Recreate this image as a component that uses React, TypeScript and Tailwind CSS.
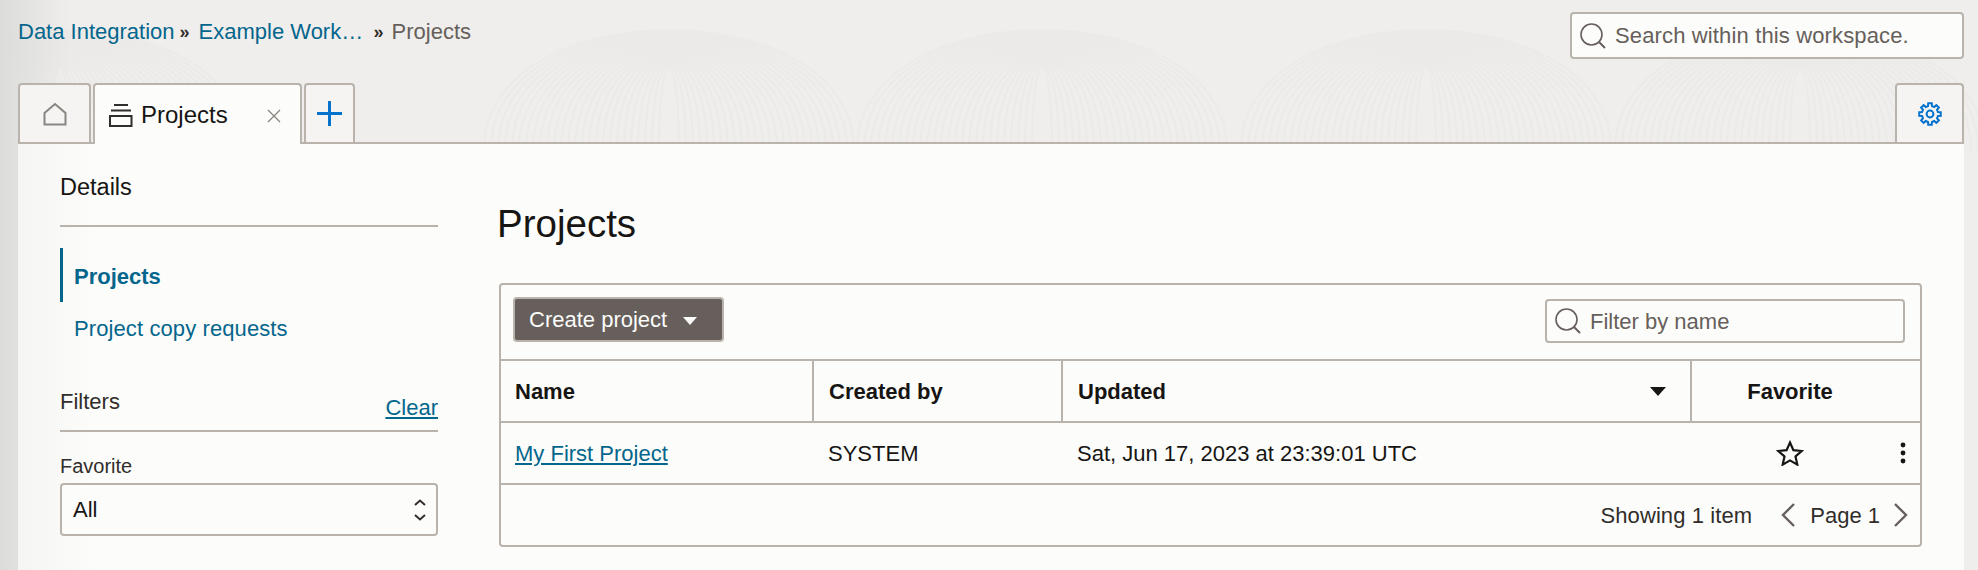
import { ReactNode } from "react";

// Gear outline with square teeth, like the settings tab icon
const gearPath = (() => {
  const teeth = 8;
  const cx = 12;
  const cy = 12;
  const points: string[] = [];
  for (let i = 0; i < teeth; i++) {
    const a = (i * Math.PI * 2) / teeth;
    const step = Math.PI / teeth;
    const corners: [number, number][] = [
      [8.2, a - step * 0.62],
      [10.9, a - step * 0.42],
      [10.9, a + step * 0.42],
      [8.2, a + step * 0.62],
    ];
    corners.forEach(([r, t]) => {
      points.push(`${(cx + r * Math.sin(t)).toFixed(2)} ${(cy - r * Math.cos(t)).toFixed(2)}`);
    });
  }
  return `M${points.join("L")}Z`;
})();

// Nested arches of the faint wood-grain backdrop
const grainCenters = [60, 669, 1042, 1426, 1800];
const grainRings = Array.from({ length: 26 }, (_, i) => i);

function SearchIcon({ size }: { size: number }) {
  return (
    <svg width={size} height={size} viewBox="0 0 26 26" fill="none" stroke="#665f5b" strokeWidth="1.6" className="shrink-0">
      <circle cx="11.5" cy="11.5" r="10.5" />
      <path d="M19 19l6 6" strokeWidth="2" />
    </svg>
  );
}

function Tab({ active, className, children }: { active?: boolean; className: string; children: ReactNode }) {
  return (
    <div
      className={`flex items-center rounded-t-[4px] border-2 border-b-0 border-[#b9b3ac] ${
        active ? "-mb-[2px] h-[61px] bg-[#fcfcfa]" : "h-[59px] bg-[#f5f4f2]"
      } ${className}`}
    >
      {children}
    </div>
  );
}

function HeaderCell({ className, children }: { className: string; children: ReactNode }) {
  return <div className={`flex items-center font-bold text-[#161513] ${className}`}>{children}</div>;
}

export default function App() {
  return (
    <div className="relative h-[570px] w-[1978px] overflow-hidden bg-[#efeeec] font-['Liberation_Sans',Arial,sans-serif] text-[22px] text-[#161513]">
      {/* textured backdrop */}
      <svg className="absolute inset-0" width="1978" height="570" fill="none" stroke="#ebeae8" strokeWidth="2">
        {grainCenters.map((cx) =>
          grainRings.map((i) => (
            <path
              key={`${cx}-${i}`}
              d={`M${cx - 10 - i * 7} 150C${cx - 10 - i * 7} ${40 - i * 2} ${cx + 10 + i * 7} ${40 - i * 2} ${cx + 10 + i * 7} 150`}
            />
          )),
        )}
      </svg>
      <div className="absolute inset-y-0 left-0 w-[70px] bg-gradient-to-r from-[#dcdcda] to-transparent" />

      <div className="relative flex h-full flex-col pl-[18px] pr-[14px]">
        {/* breadcrumb and workspace search */}
        <div className="flex h-[83px] items-start justify-between">
          <nav className="mt-[19px] flex items-center whitespace-nowrap leading-[25px]">
            <span className="text-[#04668c]">Data Integration</span>
            <span className="ml-[5px] text-[18px] font-bold leading-none text-[#312d2a]">»</span>
            <span className="ml-[9px] w-[162px] text-[#04668c]">Example Work…</span>
            <span className="ml-[13px] text-[18px] font-bold leading-none text-[#312d2a]">»</span>
            <span className="ml-[8px] text-[#665f5b]">Projects</span>
          </nav>
          <div className="mt-[12px] flex h-[47px] w-[394px] items-center gap-[9px] rounded-[4px] border-2 border-[#b9b3ac] bg-[#fcfcfa] pl-[8px] tracking-[0.14px] text-[#665f5b]">
            <SearchIcon size={26} />
            <span>Search within this workspace.</span>
          </div>
        </div>

        {/* tab strip */}
        <div className="flex h-[59px] items-start justify-between">
          <div className="relative z-10 flex gap-[2px]">
            <Tab className="w-[73px] justify-center">
              <svg width="24" height="24" viewBox="0 0 24 24" fill="none" stroke="#8a8580" strokeWidth="2">
                <path d="M1.5 11 12 2l10.5 9v11.5h-21z" />
              </svg>
            </Tab>
            <Tab active className="w-[209px] pl-[14px]">
              <svg width="24" height="24" viewBox="0 0 24 24" fill="none" stroke="#312d2a" strokeWidth="2" className="shrink-0">
                <path d="M5 2h14M2 7.5h20" />
                <rect x="1" y="13" width="21.500" height="10" />
              </svg>
              <span className="ml-[8px] text-[24px]">Projects</span>
              <svg width="14" height="14" viewBox="0 0 14 14" stroke="#8a8580" strokeWidth="1.3" className="ml-[39px] mt-[3px]">
                <path d="M1 1l12 12M13 1L1 13" />
              </svg>
            </Tab>
            <Tab className="w-[51px] justify-center">
              <svg width="25" height="25" viewBox="0 0 25 25" stroke="#0572ce" strokeWidth="3">
                <path d="M12.5 0v25M0 12.5h25" />
              </svg>
            </Tab>
          </div>
          <Tab className="w-[69px] justify-center">
            <svg width="24" height="24" viewBox="0 0 24 24" fill="none" stroke="#0572ce" strokeWidth="2">
              <path d={gearPath} strokeLinejoin="miter" />
              <circle cx="12" cy="12" r="3.4" />
            </svg>
          </Tab>
        </div>

        {/* main panel */}
        <div className="flex flex-1 border-t-2 border-[#b9b3ac] bg-gradient-to-r from-[#f5f5f4] from-0% to-[#fcfcfa] to-[4%] pl-[42px] pr-[42px]">
          <aside className="flex w-[378px] shrink-0 flex-col">
            <div className="flex h-[83px] items-start border-b-2 border-[#b9b3ac] pt-[31px] text-[23.5px] leading-[25px]">Details</div>
            <div className="mt-[21px] flex h-[54px] items-center border-l-[3px] border-[#04668c] pl-[11px] font-bold text-[#04668c]">
              <span className="mt-[2px]">Projects</span>
            </div>
            <div className="mt-[14px] pl-[14px] leading-[25px] tracking-[0.1px] text-[#04668c]">Project copy requests</div>
            <div className="mt-[45px] flex h-[46px] items-start justify-between border-b-2 border-[#b9b3ac] pt-[3px] leading-[25px]">
              <span className="text-[#312d2a]">Filters</span>
              <span className="mt-[6px] text-[#04668c] underline">Clear</span>
            </div>
            <div className="mt-[23px] text-[20px] leading-[23px] text-[#312d2a]">Favorite</div>
            <div className="mt-[5px] flex h-[53px] items-center justify-between rounded-[4px] border-2 border-[#b9b3ac] bg-[#fcfcfa] pl-[11px] pr-[9px]">
              <span>All</span>
              <svg width="14" height="24" viewBox="0 0 14 24" fill="none" stroke="#312d2a" strokeWidth="2">
                <path d="M2 7l5-4.5L12 7M2 17l5 4.5 5-4.5" />
              </svg>
            </div>
          </aside>

          <main className="ml-[61px] flex min-w-0 flex-1 flex-col">
            <h1 className="mt-[58px] -ml-[2px] h-[81px] text-[38.5px] leading-[44px] font-normal">Projects</h1>
            <div className="h-[264px] rounded-[4px] border-2 border-[#b9b3ac]">
              {/* toolbar */}
              <div className="flex h-[76px] items-start justify-between border-b-2 border-[#b9b3ac] pl-[12px] pr-[15px]">
                <div className="mt-[12px] flex h-[45px] w-[211px] items-center rounded-[4px] border-2 border-[#b9b3ac] bg-[#665f5b] pl-[14px] text-[#fcfcfa]">
                  Create project
                  <svg width="16" height="10" viewBox="0 0 16 10" className="ml-[15px] mt-[2px]" fill="#fcfcfa">
                    <path d="M1 1h14L8 9z" />
                  </svg>
                </div>
                <div className="mt-[14px] flex h-[44px] w-[360px] items-center gap-[9px] rounded-[4px] border-2 border-[#b9b3ac] pl-[8px] text-[#665f5b]">
                  <SearchIcon size={26} />
                  <span>Filter by name</span>
                </div>
              </div>
              {/* table */}
              <div className="grid h-[62px] grid-cols-[313px_249px_629px_1fr] border-b-2 border-[#b9b3ac]">
                <HeaderCell className="border-r-2 border-[#b9b3ac] pl-[14px]">Name</HeaderCell>
                <HeaderCell className="border-r-2 border-[#b9b3ac] pl-[15px]">Created by</HeaderCell>
                <HeaderCell className="justify-between border-r-2 border-[#b9b3ac] pl-[15px] pr-[24px]">
                  Updated
                  <svg width="16" height="9" viewBox="0 0 16 9" fill="#161513">
                    <path d="M0 0h16L8 9z" />
                  </svg>
                </HeaderCell>
                <HeaderCell className="justify-center pr-[32px]">Favorite</HeaderCell>
              </div>
              <div className="grid h-[62px] grid-cols-[313px_249px_629px_1fr] items-center border-b-2 border-[#b9b3ac]">
                <span className="pl-[14px] text-[#04668c] underline">My First Project</span>
                <span className="pl-[14px]">SYSTEM</span>
                <span className="pl-[14px]">Sat, Jun 17, 2023 at 23:39:01 UTC</span>
                <div className="flex items-center pl-[84px]">
                  <svg width="28" height="26" viewBox="0 0 28 26" fill="none" stroke="#161513" strokeWidth="2.2">
                    <path d="M14 2.5l3.4 7.6 8.3.9-6.2 5.5 1.800 8.100L14 20.400l-7.300 4.200 1.800-8.100L2.300 11l8.300-.9z" />
                  </svg>
                  <svg width="6" height="22" viewBox="0 0 6 22" fill="#161513" className="ml-[96px]">
                    <circle cx="3" cy="3" r="2.4" />
                    <circle cx="3" cy="11" r="2.4" />
                    <circle cx="3" cy="19" r="2.4" />
                  </svg>
                </div>
              </div>
              <div className="flex h-[60px] items-center justify-end pr-[12px] text-[#312d2a]">
                <span className="tracking-[0.1px]">Showing 1 item</span>
                <svg width="14" height="24" viewBox="0 0 14 24" fill="none" stroke="#665f5b" strokeWidth="2.4" className="ml-[29px]">
                  <path d="M13 1L2 12l11 11" />
                </svg>
                <span className="ml-[15px]">Page 1</span>
                <svg width="14" height="24" viewBox="0 0 14 24" fill="none" stroke="#665f5b" strokeWidth="2.4" className="ml-[14px]">
                  <path d="M1 1l11 11L1 23" />
                </svg>
              </div>
            </div>
          </main>
        </div>
      </div>
    </div>
  );
}
